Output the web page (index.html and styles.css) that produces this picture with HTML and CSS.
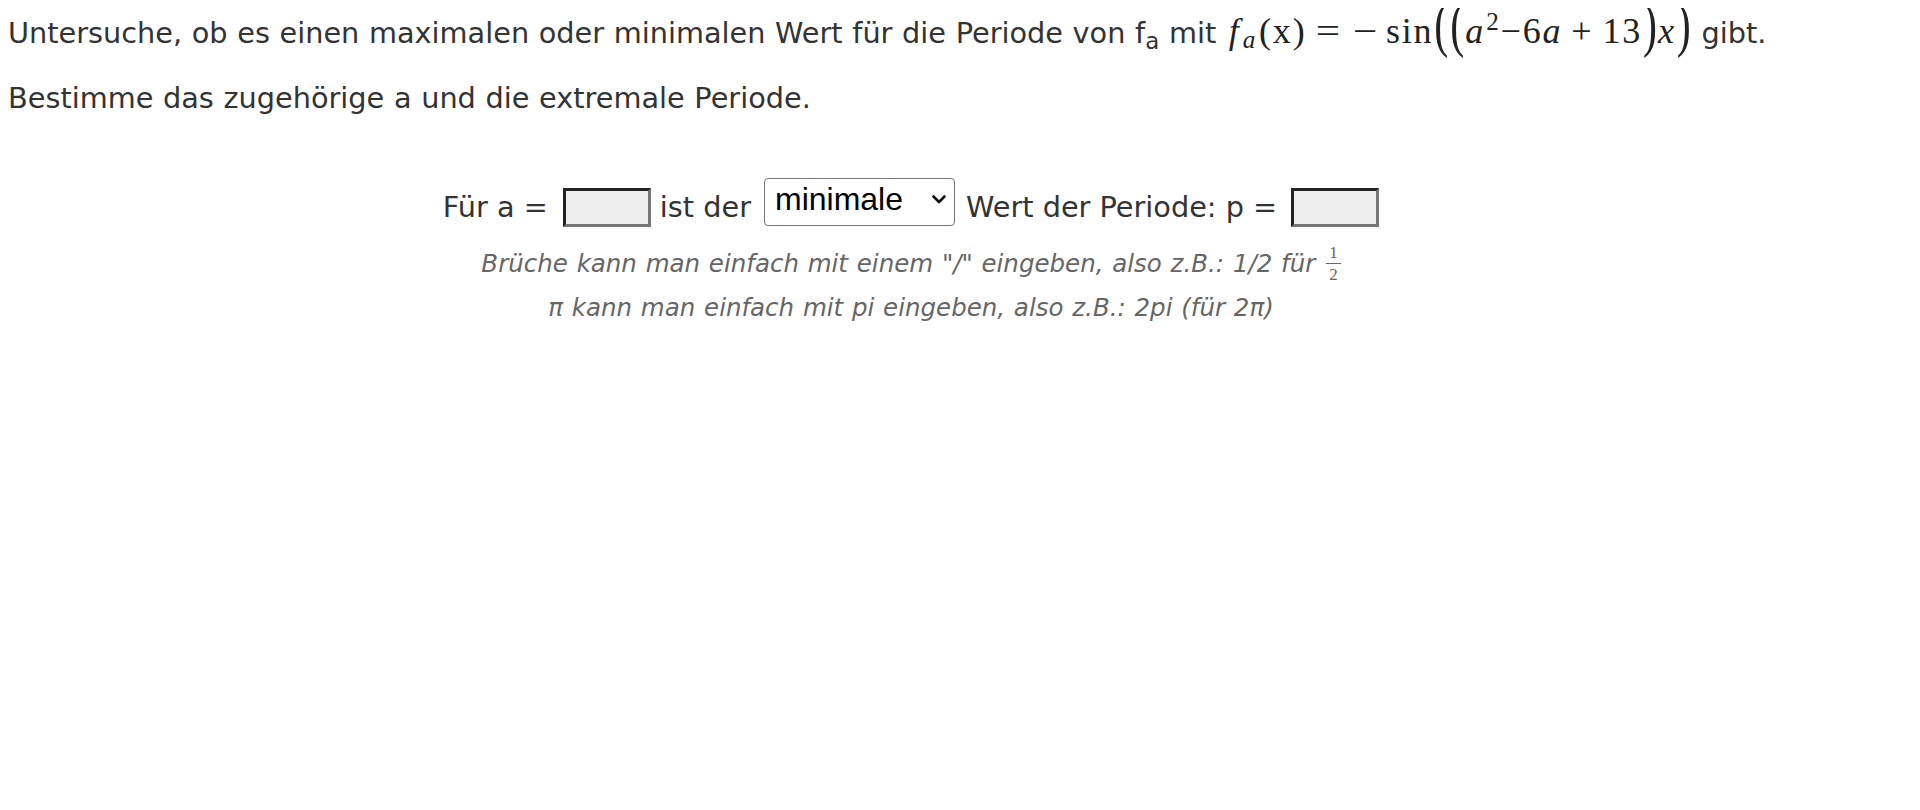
FILE: index.html
```html
<!DOCTYPE html>
<html lang="de">
<head>
<meta charset="utf-8">
<title>Periode</title>
<link rel="stylesheet" href="styles.css">
</head>
<body>
<div class="task">
  <p class="line">Untersuche, ob es einen maximalen oder minimalen Wert für die Periode von f<sub class="tsub">a</sub> mit <span class="m"><span class="mi mf">f</span><span class="msub mi">a</span>(x)<span class="rel">=</span><span class="neg">−</span><span class="op">sin</span><span class="big">(</span><span class="big">(</span><span class="mi">a</span><span class="msup">2</span>−6<span class="mi">a</span><span class="bin">+</span>13<span class="big">)</span><span class="mi">x</span><span class="big">)</span></span> gibt.</p>
  <p class="line">Bestimme das zugehörige a und die extremale Periode.</p>

  <div class="answer">
    <span class="txt">Für a =</span>
    <input class="field f1" type="text">
    <span class="txt t2">ist der</span>
    <span class="selwrap">
      <select class="choice">
        <option>minimale</option>
        <option>maximale</option>
      </select>
      <svg class="chev" width="14" height="9" viewBox="0 0 14 9"><path d="M1.5 1.5 L7 7 L12.5 1.5" fill="none" stroke="#111" stroke-width="2.6" stroke-linecap="round" stroke-linejoin="round"/></svg>
    </span>
    <span class="txt t3">Wert der Periode: p =</span>
    <input class="field f2" type="text">
  </div>

  <div class="hints">
    <p class="hint">Brüche kann man einfach mit einem "/" eingeben, also z.B.: 1/2 für <span class="frac"><span class="num">1</span><span class="den">2</span></span></p>
    <p class="hint">π kann man einfach mit pi eingeben, also z.B.: 2pi (für 2π)</p>
  </div>
</div>
</body>
</html>
```

FILE: styles.css
```css
html, body {
  background: #ffffff;
}
body {
  margin: 8px;
  font-family: "DejaVu Sans", Verdana, sans-serif;
  font-size: 28.75px;
  color: #333333;
}
.task {
  width: 1806px;
}
.line {
  margin: 0 0 15px 0;
  line-height: 50px;
  white-space: nowrap;
  word-spacing: 0.5px;
}
.tsub {
  font-size: 0.8em;
  line-height: 0;
  vertical-align: -0.25em;
}
.m {
  font-family: "Liberation Serif", "DejaVu Serif", serif;
  font-size: 36px;
  line-height: 0;
  letter-spacing: 1.8px;
  word-spacing: 0;
  color: #222222;
  margin-left: 3px;
}
.mi {
  font-style: italic;
}
.mf {
  margin-right: 2px;
}
.msub {
  font-size: 0.7em;
  vertical-align: -0.2em;
  margin-right: 2px;
}
.msup {
  font-size: 0.7em;
  vertical-align: 0.5em;
  margin-left: 1px;
}
.rel {
  display: inline-block;
  margin: 0 0.42em 0 0.32em;
  transform: scaleX(1.2);
}
.neg {
  display: inline-block;
  margin-right: 0.14em;
  transform: scaleX(1.2);
}
.bin {
  margin: 0 0.25em;
}
.op {
  margin-left: 0.1em;
}
.big {
  display: inline-block;
  font-size: 42px;
  line-height: 30px;
  font-style: normal;
  letter-spacing: 0;
  margin: 0 1px;
  transform-origin: 50% 19px;
  transform: translateY(-3px) scaleY(1.45);
}
.answer {
  display: flex;
  align-items: flex-start;
  justify-content: center;
  margin-top: 55px;
}
.txt {
  line-height: 50px;
  margin-top: 4px;
  white-space: nowrap;
}
.field {
  box-sizing: border-box;
  width: 88px;
  height: 39px;
  margin: 10px 0 0 0;
  padding: 0;
  border-style: solid;
  border-width: 3px;
  border-color: #222222 #777777 #777777 #222222;
  background: #eeeeee;
}
.f1 {
  margin-left: 15px;
}
.t2 {
  margin-left: 9px;
}
.selwrap {
  position: relative;
  display: block;
  margin-left: 13px;
}
.choice {
  display: block;
  box-sizing: border-box;
  width: 191px;
  height: 48px;
  margin: 0;
  padding: 2px 30px 8px 10px;
  -webkit-appearance: none;
  appearance: none;
  font-family: "Liberation Sans", Arial, sans-serif;
  font-size: 32px;
  color: #000000;
  background: #ffffff;
  border: 1px solid #767676;
  border-radius: 4px;
}
.chev {
  position: absolute;
  right: 9px;
  top: 17px;
  pointer-events: none;
}
.t3 {
  margin-left: 11px;
}
.f2 {
  margin-left: 14px;
}
.hints {
  margin-top: 10px;
  text-align: center;
}
.hint {
  margin: 0;
  font-size: 24.5px;
  font-style: italic;
  line-height: 44px;
  word-spacing: 1px;
  color: #666666;
}
.frac {
  display: inline-flex;
  flex-direction: column;
  vertical-align: 14px;
  font-family: "Liberation Serif", "DejaVu Serif", serif;
  font-style: normal;
  font-size: 17px;
  line-height: 17px;
  text-align: center;
  margin-left: 2px;
}
.num {
  padding: 0 3px 2px;
  border-bottom: 1px solid #666666;
}
.den {
  padding: 2px 3px 0;
}
```
